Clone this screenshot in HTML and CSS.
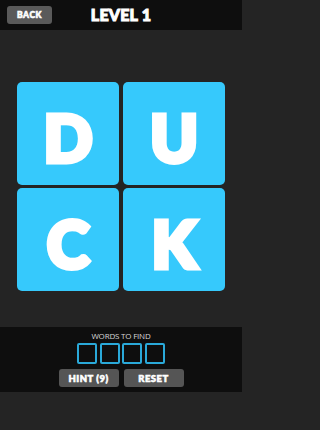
FILE: index.html
```html
<!DOCTYPE html>
<html>
<head>
<meta charset="utf-8">
<link rel="stylesheet" href="styles.css">
</head>
<body>
<div class="app">
  <header class="topbar">
    <div class="left"><button class="btn back">BACK</button></div>
    <h1 class="title">LEVEL 1</h1>
    <div class="right"></div>
  </header>
  <main class="board">
    <div class="grid">
      <div class="tile">D</div>
      <div class="tile">U</div>
      <div class="tile">C</div>
      <div class="tile">K</div>
    </div>
  </main>
  <section class="panel">
    <div class="label">WORDS TO FIND</div>
    <div class="slots">
      <span class="slot"></span><span class="slot"></span><span class="slot"></span><span class="slot"></span>
    </div>
    <div class="actions">
      <button class="btn action">HINT (9)</button>
      <button class="btn action">RESET</button>
    </div>
  </section>
</div>
</body>
</html>
```
FILE: styles.css
```css
* { box-sizing: border-box; }
html, body { margin: 0; padding: 0; }
html { background: #242424; }
body {
  background: #242424;
  width: 242px;
  height: 430px;
  overflow: hidden;
  font-family: "Lato", "DejaVu Sans", sans-serif;
}
.app { display: flex; flex-direction: column; height: 430px; }
.topbar {
  height: 30px;
  background: #0e0e0e;
  display: grid;
  grid-template-columns: 1fr auto 1fr;
  align-items: center;
}
.left { padding-left: 7px; display: flex; }
.btn {
  border: none;
  background: #5a5a5a;
  color: #fff;
  font-family: "Lato", "DejaVu Sans", sans-serif;
  font-weight: 900;
  border-radius: 3px;
  padding: 0;
  display: flex;
  align-items: center;
  justify-content: center;
  -webkit-text-stroke: 0.6px #fff;
}
.back {
  width: 45px;
  height: 18px;
  font-size: 8.5px;
  letter-spacing: 0.6px;
}
.title {
  margin: 0;
  color: #fff;
  font-size: 16px;
  font-weight: 900;
  letter-spacing: 0.2px;
  -webkit-text-stroke: 1px #fff;
  line-height: 1;
}
.board { padding-top: 52px; display: flex; justify-content: center; }
.grid {
  display: grid;
  grid-template-columns: 102px 102px;
  grid-template-rows: 103px 103px;
  gap: 3px 4px;
}
.tile {
  background: #36c9fc;
  border-radius: 5px;
  color: #fff;
  font-weight: 900;
  font-size: 64px;
  -webkit-text-stroke: 5px #fff;
  display: flex;
  align-items: center;
  justify-content: center;
  padding-top: 8px;
  line-height: 1;
}
.panel {
  margin-top: 36px;
  height: 65px;
  background: #0e0e0e;
  display: flex;
  flex-direction: column;
  align-items: center;
  padding-top: 4px;
}
.label {
  color: #d6d6d6;
  font-family: "Open Sans", "Liberation Sans", sans-serif;
  font-size: 8px;
  line-height: 10px;
  letter-spacing: -0.2px;
}
.slots { display: flex; gap: 2.5px; margin-top: 2px; }
.slot {
  width: 20px;
  height: 21px;
  border: 2px solid #2aa9d9;
  border-radius: 2px;
  background: #0e0e0e;
}
.actions { display: flex; gap: 5px; margin-top: 5px; }
.action {
  width: 60px;
  height: 18px;
  font-size: 9.5px;
  background: #555;
  letter-spacing: 0.5px;
}
```
